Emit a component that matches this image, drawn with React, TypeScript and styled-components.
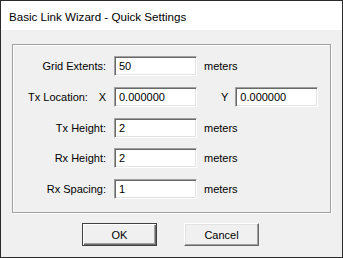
import styled, { createGlobalStyle } from "styled-components";

const GlobalStyle = createGlobalStyle`
  html, body {
    margin: 0;
    padding: 0;
    background: #f0f0f0;
  }
  * {
    box-sizing: border-box;
  }
`;

type Field = {
  label: string;
  value: string;
  unit?: string;
};

const fields: Field[] = [
  { label: "Tx Height:", value: "2", unit: "meters" },
  { label: "Rx Height:", value: "2", unit: "meters" },
  { label: "Rx Spacing:", value: "1", unit: "meters" },
];

export default function App() {
  return (
    <>
      <GlobalStyle />
      <Window>
        <TitleBar>Basic Link Wizard - Quick Settings</TitleBar>
        <Body>
          <GroupBox>
            <Label>Grid Extents:</Label>
            <TextBox defaultValue="50" />
            <Unit>meters</Unit>

            <Label $split>
              <span>Tx Location:</span>
              <span>X</span>
            </Label>
            <TextBox defaultValue="0.000000" />
            <CoordY>
              <span>Y</span>
              <TextBox defaultValue="0.000000" />
            </CoordY>

            {fields.map((f) => (
              <Row key={f.label}>
                <Label>{f.label}</Label>
                <TextBox defaultValue={f.value} />
                <Unit>{f.unit}</Unit>
              </Row>
            ))}
          </GroupBox>
          <Buttons>
            <Button $default>OK</Button>
            <Button>Cancel</Button>
          </Buttons>
        </Body>
      </Window>
    </>
  );
}

const Window = styled.div`
  width: 343px;
  height: 258px;
  border: 1px solid #2b2b2b;
  display: flex;
  flex-direction: column;
  font-family: "Liberation Sans", Arial, sans-serif;
  font-size: 11px;
  color: #000;
`;

const TitleBar = styled.div`
  height: 29px;
  background: #fff;
  display: flex;
  align-items: center;
  padding-left: 8px;
  padding-top: 1px;
  font-size: 11.6px;
  color: #000;
`;

const Body = styled.div`
  flex: 1;
  background: #f0f0f0;
  padding: 14px 0 0 11px;
`;

const GroupBox = styled.div`
  width: 319px;
  height: 169px;
  border: 1px solid #a0a0a0;
  box-shadow: inset 1px 1px 0 #fff, 1px 1px 0 #fff;
  padding: 11px 0 0 15px;
  display: grid;
  grid-template-columns: 79px 83px auto;
  grid-auto-rows: 20px;
  column-gap: 7px;
  row-gap: 10.75px;
  align-items: center;
`;

const Row = styled.div`
  display: contents;
`;

const Label = styled.div<{ $split?: boolean }>`
  display: flex;
  justify-content: ${({ $split }) => ($split ? "space-between" : "flex-end")};
  padding-right: 1px;
  white-space: nowrap;
`;

const Unit = styled.div`
  white-space: nowrap;
`;

const CoordY = styled.div`
  display: flex;
  align-items: center;
  gap: 7px;
  padding-left: 17px;
`;

const TextBox = styled.input`
  width: 83px;
  height: 20px;
  margin: 0;
  padding: 0 0 0 4px;
  background: #fff;
  border: 1px solid;
  border-color: #a0a0a0 #fff #fff #a0a0a0;
  box-shadow: inset 1px 1px 0 #696969, inset -1px -1px 0 #e3e3e3;
  font-family: inherit;
  font-size: 11px;
  color: #000;
  outline: none;
`;

const Buttons = styled.div`
  width: 319px;
  display: flex;
  justify-content: center;
  gap: 27px;
  margin-top: 10px;
  padding-right: 2px;
`;

const Button = styled.button<{ $default?: boolean }>`
  width: 75px;
  height: 23px;
  padding: 0;
  background: #f0f0f0;
  font-family: inherit;
  font-size: 11px;
  color: #000;
  border: 1px solid;
  border-color: ${({ $default }) =>
    $default ? "#404040" : "#fff #696969 #696969 #fff"};
  box-shadow: ${({ $default }) =>
    $default
      ? "inset 1px 1px 0 #fff, inset -1px -1px 0 #696969, inset -2px -2px 0 #a0a0a0"
      : "inset -1px -1px 0 #a0a0a0, inset 1px 1px 0 #e3e3e3"};
`;
